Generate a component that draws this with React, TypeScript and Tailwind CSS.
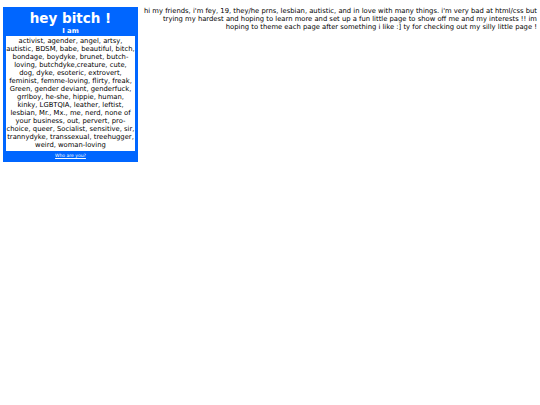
export default function App() {
  return (
    <div className="flex items-start gap-[3px] pt-[7px] pl-[3px] pr-[3px] text-black" style={{ fontFamily: '"DejaVu Sans", Verdana, sans-serif' }}>
      <div className="w-[135px] shrink-0 bg-[#0066ff] pb-[2px]">
        <div className="text-center text-white font-bold text-[13.5px] leading-[17px] pt-[3px]">hey bitch !</div>
        <div className="text-center text-white font-bold text-[6.8px] leading-[8px] pb-[1px]">I am</div>
        <div className="mx-[3px] bg-white text-center text-[6.8px] leading-[8px] pt-[1px] pb-[2px]">
          activist, agender, angel, artsy, autistic, BDSM, babe, beautiful, bitch, bondage, boydyke, brunet, butch-loving, butchdyke,creature, cute, dog, dyke, esoteric, extrovert, feminist, femme-loving, flirty, freak, Green, gender deviant, genderfuck, grrlboy, he-she, hippie, human, kinky, LGBTQIA, leather, leftist, lesbian, Mr., Mx., me, nerd, none of your business, out, pervert, pro-choice, queer, Socialist, sensitive, sir, trannydyke, transsexual, treehugger, weird, woman-loving
        </div>
        <div className="text-center text-[4.5px] leading-[8px] mt-[1px]">
          <a href="#" className="text-white underline">Who are you?</a>
        </div>
      </div>
      <div className="flex-1 text-right text-[6.8px] leading-[8px]">
        hi my friends, i'm fey, 19, they/he prns, lesbian, autistic, and in love with many things. i'm very bad at html/css but trying my hardest and hoping to learn more and set up a fun little page to show off me and my interests !! im hoping to theme each page after something i like :] ty for checking out my silly little page !
      </div>
    </div>
  );
}
